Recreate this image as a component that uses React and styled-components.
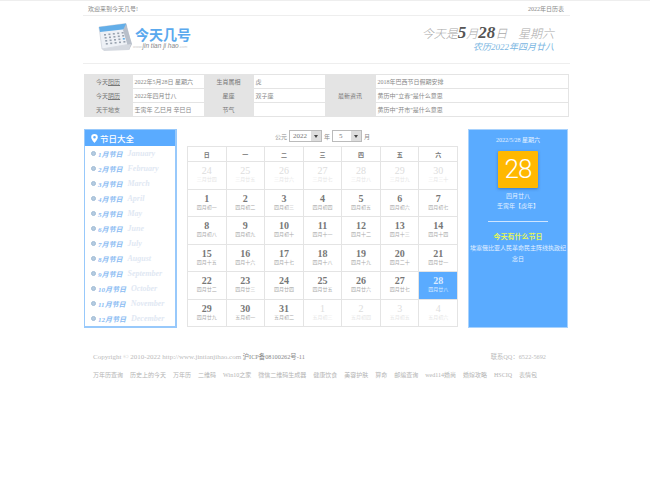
import React from "react";
import styled, { createGlobalStyle } from "styled-components";

const Global = createGlobalStyle`
  html, body { margin: 0; padding: 0; background: #fff; }
  body { font-family: "Liberation Serif", "Noto Sans CJK SC", serif; color: #777; }
  * { box-sizing: border-box; }
`;

const TopBar = styled.div`
  border-top: 1px solid #eee;
`;
const Wrap = styled.div`
  width: 484px;
  margin-left: 84px;
`;
const TopInner = styled.div`
  width: 487px;
  margin-left: 83px;
  border-bottom: 1px solid #eee;
  display: flex;
  justify-content: space-between;
  align-items: center;
  height: 15px;
  padding: 0 6px 0 5px;
  font-size: 6px;
  color: #888;
`;
const Header = styled.div`
  height: 48px;
  border-bottom: 1px solid #eee;
  display: flex;
  justify-content: space-between;
  padding: 7px 16px 0 15px;
  width: 487px;
  margin-left: 83px;
`;
const Logo = styled.div`
  display: flex;
  align-items: flex-start;
  gap: 1px;
`;
const LogoWords = styled.div`
  display: flex;
  flex-direction: column;
  padding-top: 3px;
`;
const LogoTitle = styled.div`
  font-family: "Noto Sans CJK SC", sans-serif;
  font-weight: 700;
  font-size: 14px;
  line-height: 16px;
  color: #5aa9ee;
`;
const LogoSub = styled.div`
  font-family: "Liberation Sans", sans-serif;
  font-style: italic;
  font-size: 6.5px;
  line-height: 7px;
  color: #888;
  margin-left: -2px;
  white-space: nowrap;
  span { color: #ccc; font-size: 4px; }
`;
const Today = styled.div`
  text-align: right;
`;
const TodayLine = styled.div`
  font-family: "Noto Sans CJK SC", serif;
  font-size: 12px;
  line-height: 19px;
  font-style: italic;
  color: #aaa;
  font-weight: 300;
  white-space: pre;
  b { font-family: "Liberation Serif", serif; font-size: 17px; font-weight: 700; color: #555; }
`;
const LunarLine = styled.div`
  font-size: 9px;
  line-height: 11px;
  font-style: italic;
  color: #7ab6e2;
`;

const InfoTable = styled.table`
  width: 485px;
  margin: 10px 0 0 83.5px;
  border-collapse: collapse;
  table-layout: fixed;
  font-size: 6px;
  td { height: 14px; border: 1px solid #e4e4e4; padding: 0 2px; color: #888; white-space: nowrap; line-height: 8px; }
`;
const LabelCell = styled.td`
  background: #e4e4e4;
  text-align: center;
  color: #777 !important;
  u { text-decoration: underline; }
`;

const Main = styled(Wrap)`
  display: flex;
  align-items: stretch;
  margin-top: 12px;
  height: 199px;
`;
const Side = styled.div`
  width: 93px;
  border: 1px solid #98c9fb;
  border-width: 1px 2px 2px 1px;
  flex: none;
`;
const SideHead = styled.div`
  height: 16px;
  background: #5aabff;
  color: #fff;
  font-size: 8.5px;
  display: flex;
  align-items: center;
  gap: 2px;
  padding-left: 6px;
  font-weight: 500;
`;
const SideList = styled.ul`
  list-style: none;
  margin: 0;
  padding: 0 0 0 6px;
`;
const SideItem = styled.li`
  height: 15px;
  display: flex;
  align-items: center;
  gap: 2px;
  font-size: 7px;
  font-style: italic;
  font-weight: 700;
  color: #8bbcf3;
  white-space: nowrap;
`;
const Bullet = styled.i`
  width: 5px;
  height: 5px;
  border-radius: 50%;
  background: #b5cbe0;
  border: 1px solid #a0bcd6;
  flex: none;
`;
const English = styled.span`
  color: #dfe8f3;
  margin-left: 3px;
  font-size: 8px;
`;
const Center = styled.div`
  width: 271px;
  margin: 0 10px;
  flex: none;
`;
const Picker = styled.div`
  height: 17px;
  display: flex;
  align-items: center;
  justify-content: center;
  gap: 2px;
  font-size: 6px;
  color: #888;
  padding-bottom: 3px;
`;
const Select = styled.div`
  width: ${(p) => p.$w}px;
  height: 12px;
  border: 1px solid #bbb;
  display: flex;
  align-items: center;
  justify-content: space-between;
  font-size: 7px;
  color: #777;
  padding-left: ${(p) => p.$pad}px;
`;
const Arrow = styled.span`
  width: 10px;
  height: 10px;
  background: #ddd;
  display: flex;
  align-items: center;
  justify-content: center;
  &::after {
    content: "";
    border: 2.5px solid transparent;
    border-top: 3px solid #444;
    margin-top: 3px;
  }
`;
const Cal = styled.div`
  display: grid;
  grid-template-columns: repeat(7, 1fr);
  grid-template-rows: 15px repeat(6, 27.5px);
  border-top: 1px solid #e4e4e4;
  border-left: 1px solid #e4e4e4;
`;
const Head = styled.div`
  border-right: 1px solid #e4e4e4;
  border-bottom: 1px solid #e4e4e4;
  display: flex;
  align-items: center;
  justify-content: center;
  font-size: 6px;
  font-weight: 700;
  color: #777;
`;
const Day = styled.div`
  border-right: 1px solid #e4e4e4;
  border-bottom: 1px solid #e4e4e4;
  display: flex;
  flex-direction: column;
  align-items: center;
  justify-content: center;
  background: ${(p) => (p.$today ? "#5aabff" : "#fff")};
  color: ${(p) => (p.$today ? "#dcebff" : p.$off ? "#ddd" : "#777")};
`;
const DayNum = styled.div`
  font-size: 10px;
  line-height: 10px;
  font-weight: ${(p) => (p.$off ? 400 : 700)};
`;
const DayLunar = styled.div`
  font-size: 5px;
  line-height: 8px;
  color: ${(p) => (p.$today ? "#dcebff" : p.$off ? "#e6e6e6" : "#aaa")};
`;
const Right = styled.div`
  width: 100px;
  flex: none;
  background: #5aabff;
  border: 1px solid #a8d2fd;
  color: #e4f1ff;
  font-size: 6px;
  text-align: center;
  display: flex;
  flex-direction: column;
  align-items: center;
  padding-top: 5px;
`;
const RightDate = styled.div`
  line-height: 10px;
`;
const BigDay = styled.div`
  width: 40px;
  height: 37px;
  margin: 6px 0 3px;
  background: #ffb800;
  border-radius: 1px;
  box-shadow: 0 1px 3px rgba(30, 80, 150, 0.5);
  color: #fff;
  font-family: "Roboto", sans-serif;
  font-weight: 300;
  font-size: 26px;
  letter-spacing: -1px;
  line-height: 37px;
`;
const RightLine = styled.div`
  line-height: 10px;
`;
const Rule = styled.div`
  width: 60px;
  height: 1px;
  background: #cfe5ff;
  margin: 10px 0;
`;
const FestTitle = styled.div`
  font-size: 7px;
  line-height: 11px;
  font-weight: 700;
  color: #e3f55a;
`;
const FestText = styled.div`
  line-height: 11px;
  width: 97px;
`;

const Footer = styled(Wrap)`
  font-size: 6px;
  color: #bbb;
  padding: 24px 0 0 9px;
`;
const Copy = styled.div`
  display: flex;
  justify-content: space-between;
  line-height: 10px;
  padding-right: 22px;
  font-size: 6.3px;
`;
const CopyUrl = styled.span`
  font-size: 7px;
`;
const Icp = styled.span`
  color: #888;
  font-size: 6.3px;
`;
const Links = styled.div`
  display: flex;
  gap: 7px;
  margin-top: 8px;
  line-height: 10px;
  color: #b4b4b4;
  white-space: nowrap;
`;

const months = ["January", "February", "March", "April", "May", "June", "July", "August", "September", "October", "November", "December"];
const weeks = ["日", "一", "二", "三", "四", "五", "六"];
const prevL = ["三月廿四", "三月廿五", "三月廿六", "三月廿七", "三月廿八", "三月廿九", "三月三十"];
const mayL = ["初一", "初二", "初三", "初四", "初五", "初六", "初七", "初八", "初九", "初十", "十一", "十二", "十三", "十四", "十五", "十六", "十七", "十八", "十九", "二十", "廿一", "廿二", "廿三", "廿四", "廿五", "廿六", "廿七", "廿八"];
const days = [
  ...prevL.map((l, i) => ({ n: 24 + i, l, off: true })),
  ...mayL.map((l, i) => ({ n: i + 1, l: "四月" + l, today: i === 27 })),
  { n: 29, l: "四月廿九" },
  { n: 30, l: "五月初一" },
  { n: 31, l: "五月初二" },
  { n: 1, l: "五月初三", off: true },
  { n: 2, l: "五月初四", off: true },
  { n: 3, l: "五月初五", off: true },
  { n: 4, l: "五月初六", off: true },
];
const links = ["万年历查询", "历史上的今天", "万年历", "二维码", "Win10之家", "微信二维码生成器", "健康饮食", "美容护肤", "算命", "邮编查询", "wed114婚尚", "婚嫁攻略", "HSCIQ", "表情包"];

const CalendarIcon = () => (
  <svg width="36" height="28" viewBox="0 0 36 28">
    <path d="M1 4 L28 0.5 L33 21 L4 26 Z" fill="#eef1f6" stroke="#c4cad4" strokeWidth=".6" />
    <path d="M1 4 L28 0.5 L29 6 L2 9 Z" fill="#63aee8" />
    <path d="M28 1 L34 21 L31 27 L25 7 Z" fill="#b8bfca" />
    <path d="M4 26 L33 21 L31 27 L6 28 Z" fill="#d5d9e0" />
    {Array.from({ length: 20 }).map((_, i) => (
      <rect key={i} x={6 + (i % 5) * 4.4 + Math.floor(i / 5) * 0.6} y={11 - (i % 5) * 0.5 + Math.floor(i / 5) * 3} width="2" height="1.6" fill={i === 14 ? "#63aee8" : "#9aa3b0"} />
    ))}
  </svg>
);

const Pin = () => (
  <svg width="7" height="9" viewBox="0 0 7 9">
    <path fillRule="evenodd" d="M3.5 0a3.3 3.3 0 0 0-3.3 3.3C.2 5.5 3.5 9 3.5 9s3.3-3.5 3.3-5.7A3.3 3.3 0 0 0 3.5 0Zm0 2a1.3 1.3 0 1 1 0 2.6 1.3 1.3 0 0 1 0-2.6Z" fill="#fff" />
  </svg>
);

export default function App() {
  return (
    <>
      <Global />
      <TopBar>
        <TopInner>
          <span>欢迎来到今天几号!</span>
          <span>2022年日历表</span>
        </TopInner>
      </TopBar>
      <Header>
        <Logo>
          <CalendarIcon />
          <LogoWords>
            <LogoTitle>今天几号</LogoTitle>
            <LogoSub><span>www.</span>jin tian ji hao<span>.com</span></LogoSub>
          </LogoWords>
        </Logo>
        <Today>
          <TodayLine>今天是<b>5</b>月<b>28</b>日{"    "}星期六</TodayLine>
          <LunarLine>农历2022年四月廿八</LunarLine>
        </Today>
      </Header>
      <InfoTable>
        <colgroup>
          <col style={{ width: 48 }} />
          <col style={{ width: 72 }} />
          <col style={{ width: 49 }} />
          <col style={{ width: 72 }} />
          <col style={{ width: 50 }} />
          <col />
        </colgroup>
        <tbody>
          <tr>
            <LabelCell>今天<u>阳历</u></LabelCell>
            <td>2022年5月28日 星期六</td>
            <LabelCell>生肖属相</LabelCell>
            <td>虎</td>
            <LabelCell rowSpan={3}>最新资讯</LabelCell>
            <td>2018年巴西节日假期安排</td>
          </tr>
          <tr>
            <LabelCell>今天<u>阴历</u></LabelCell>
            <td>2022年四月廿八</td>
            <LabelCell>星座</LabelCell>
            <td>双子座</td>
            <td>黄历中“立春”是什么意思</td>
          </tr>
          <tr>
            <LabelCell>天干地支</LabelCell>
            <td>壬寅年 乙巳月 辛巳日</td>
            <LabelCell>节气</LabelCell>
            <td></td>
            <td>黄历中“开市”是什么意思</td>
          </tr>
        </tbody>
      </InfoTable>
      <Main>
        <Side>
          <SideHead><Pin />节日大全</SideHead>
          <SideList>
            {months.map((m, i) => (
              <SideItem key={m}>
                <Bullet />
                {i + 1}月节日
                <English>{m}</English>
              </SideItem>
            ))}
          </SideList>
        </Side>
        <Center>
          <Picker>
            公元
            <Select $w={33} $pad={3}>2022<Arrow /></Select>
            年
            <Select $w={30} $pad={6}>5<Arrow /></Select>
            月
          </Picker>
          <Cal>
            {weeks.map((w) => <Head key={w}>{w}</Head>)}
            {days.map((d, i) => (
              <Day key={i} $off={d.off} $today={d.today}>
                <DayNum $off={d.off}>{d.n}</DayNum>
                <DayLunar $off={d.off} $today={d.today}>{d.l}</DayLunar>
              </Day>
            ))}
          </Cal>
        </Center>
        <Right>
          <RightDate>2022/5/28 星期六</RightDate>
          <BigDay>28</BigDay>
          <RightLine>四月廿八</RightLine>
          <RightLine>壬寅年【虎年】</RightLine>
          <Rule />
          <FestTitle>今天有什么节日</FestTitle>
          <FestText>埃塞俄比亚人民革命民主阵线执政纪念日</FestText>
        </Right>
      </Main>
      <Footer>
        <Copy>
          <span><CopyUrl>Copyright © 2010-2022 http://www.jintianjihao.com</CopyUrl> <Icp>沪ICP备08100262号-11</Icp></span>
          <span>联系QQ：6522-5692</span>
        </Copy>
        <Links>
          {links.map((l) => <span key={l}>{l}</span>)}
        </Links>
      </Footer>
    </>
  );
}
